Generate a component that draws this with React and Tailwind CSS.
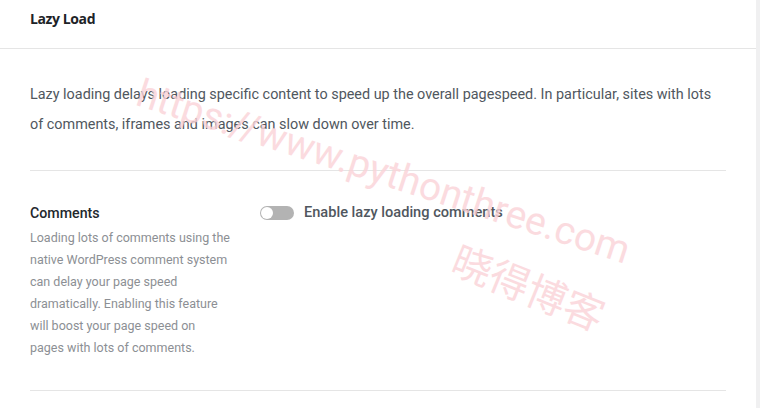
import React from 'react';

const Toggle = () => (
  <div className="relative h-[14px] w-[34px] shrink-0 rounded-full bg-[#b3b3b3]">
    <div className="absolute left-[1px] top-[1px] h-[12px] w-[12px] rounded-full bg-white" />
  </div>
);

export default function App() {
  return (
    <div className="relative flex h-[408px] w-[760px] overflow-hidden bg-white font-['Roboto',sans-serif]">
      <div className="flex-1">
        <div className="flex h-[49px] items-center border-b border-[#e5e5e5] px-[30px] pb-[12px]">
          <h2 className="text-[14px] font-bold text-[#1d2327] font-['Open_Sans',sans-serif] tracking-[-0.4px]">Lazy Load</h2>
        </div>
        <div className="px-[30px]">
          <p className="border-b border-[#e5e5e5] pb-[30px] pt-[31px] pr-[10px] text-[14.4px] leading-[30px] text-[#50575e]">
            Lazy loading delays loading specific content to speed up the overall pagespeed. In particular, sites with lots
            of comments, iframes and images can slow down over time.
          </p>
          <div className="flex border-b border-[#e5e5e5] pb-[31px] pt-[32px]">
            <div className="w-[230px] shrink-0">
              <h3 className="text-[14.2px] font-medium leading-[20px] text-[#23282d]">Comments</h3>
              <p className="mt-[4px] w-[202px] text-[12.5px] leading-[22px] text-[#8c8f94]">
                Loading lots of comments using the native WordPress comment system can delay your page speed dramatically. Enabling this feature will boost your page speed on pages with lots of comments.
              </p>
            </div>
            <div className="flex h-[20px] items-center gap-[10px]">
              <Toggle />
              <span className="text-[14.6px] font-medium text-[#50575e]">Enable lazy loading comments</span>
            </div>
          </div>
        </div>
      </div>
      <div className="w-[4px] bg-[#f0f0f1]" />
      <div className="pointer-events-none absolute left-[138px] top-[73px] origin-left rotate-[18deg] whitespace-nowrap text-[39px] leading-none text-[#fbd3d8] opacity-80 font-['Roboto',sans-serif]">
        https://www.pythonthree.com
      </div>
      <div className="pointer-events-none absolute left-[455px] top-[236px] origin-left rotate-[22deg] whitespace-nowrap text-[40px] leading-none text-[#fbd3d8] opacity-80 font-['Noto_Sans_CJK_SC',sans-serif]">
        晓得博客
      </div>
    </div>
  );
}
